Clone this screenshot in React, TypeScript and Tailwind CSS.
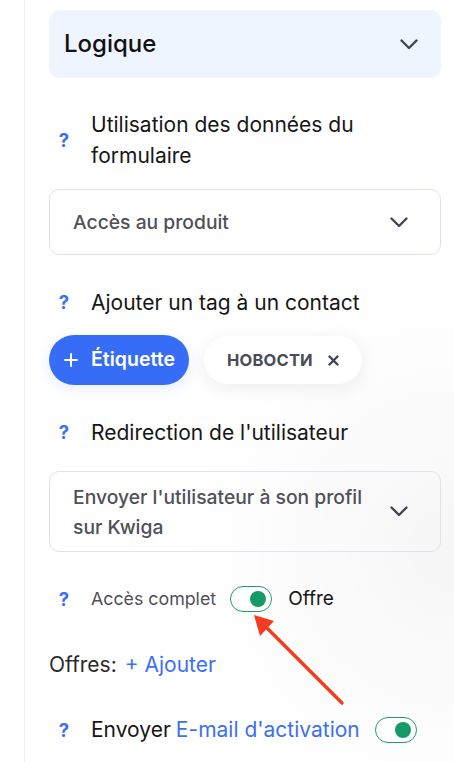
import React from "react";

function Chevron({ className = "" }: { className?: string }) {
  return (
    <svg width="18" height="11" viewBox="0 0 18 11" fill="none" className={className}>
      <polyline points="1.5,1.5 9,9 16.5,1.5" stroke="#3f4653" strokeWidth="2.4" strokeLinecap="round" strokeLinejoin="round" />
    </svg>
  );
}

function Q() {
  return (
    <span className="w-[30px] shrink-0 text-center text-[18.5px] font-bold text-[#3c6ff6] leading-none">?</span>
  );
}

function Toggle() {
  return (
    <span className="inline-flex items-center justify-end w-[42px] h-[26px] rounded-full border-[1.5px] border-[#1e9e6b] bg-white pr-[5px] box-border">
      <span className="w-[16px] h-[16px] rounded-full bg-[#169b68]" />
    </span>
  );
}

export default function App() {
  return (
    <div className="relative w-[454px] h-[762px] bg-white overflow-hidden font-['Inter',sans-serif]">
      <div className="absolute inset-0 pointer-events-none bg-[radial-gradient(circle_at_100%_72%,rgba(0,0,0,0.035),transparent_38%)]" />
      <div className="relative pl-[24px] h-full">
        <div className="border-l border-[#efefef] h-full pl-[24px] pr-[13px] pt-[10px]">
          {/* Logique panel */}
          <div className="h-[68px] rounded-[10px] bg-[#eff5fe] flex items-center justify-between pl-[15px] pr-[23px]">
            <span className="text-[24px] font-medium text-[#111111]">Logique</span>
            <Chevron />
          </div>

          {/* Label 1 */}
          <div className="mt-[31px] flex items-center">
            <Q />
            <span className="ml-[12px] text-[21px] leading-[31px] text-[#161616]">
              Utilisation des données du
              <br />
              formulaire
            </span>
          </div>

          {/* Select 1 */}
          <div className="mt-[18px] h-[66px] rounded-[10px] border border-[#e2e0ee] flex items-center justify-between pl-[23px] pr-[32px]">
            <span className="text-[19.3px] font-medium text-[#4f5058]">Accès au produit</span>
            <Chevron />
          </div>

          {/* Label 2 */}
          <div className="mt-[32px] flex items-center h-[31px]">
            <Q />
            <span className="ml-[12px] text-[21px] leading-[31px] text-[#161616]">Ajouter un tag à un contact</span>
          </div>

          {/* Tags */}
          <div className="mt-[17px] flex items-center gap-[15px]">
            <div className="h-[50px] w-[140px] rounded-full bg-[#376cf6] flex items-center pl-[15px] text-white shadow-[0_4px_14px_rgba(55,108,246,0.12)]">
              <svg width="14" height="14" viewBox="0 0 14 14">
                <path d="M7 1v12M1 7h12" stroke="white" strokeWidth="2" strokeLinecap="round" />
              </svg>
              <span className="ml-[13px] text-[19.5px] font-semibold">Étiquette</span>
            </div>
            <div className="h-[48px] w-[158px] rounded-full bg-white flex items-center pl-[23px] shadow-[0_4px_18px_rgba(20,30,60,0.08)]">
              <span className="text-[16.5px] font-bold text-[#4a4d55] tracking-[0.2px]">НОВОСТИ</span>
              <svg width="11" height="11" viewBox="0 0 11 11" className="ml-[15px]">
                <path d="M1.5 1.5l8 8M9.5 1.5l-8 8" stroke="#3f4653" strokeWidth="2.4" strokeLinecap="round" />
              </svg>
            </div>
          </div>

          {/* Label 3 */}
          <div className="mt-[32px] flex items-center h-[31px]">
            <Q />
            <span className="ml-[12px] text-[21px] leading-[31px] text-[#161616]">Redirection de l'utilisateur</span>
          </div>

          {/* Select 2 */}
          <div className="mt-[23px] h-[81px] rounded-[10px] border border-[#e2e0ee] flex items-center justify-between pl-[23px] pr-[32px]">
            <span className="text-[19.3px] leading-[30px] font-medium text-[#4f5058]">
              Envoyer l'utilisateur à son profil
              <br />
              sur Kwiga
            </span>
            <Chevron />
          </div>

          {/* Accès complet */}
          <div className="mt-[34px] flex items-center h-[26px]">
            <Q />
            <span className="ml-[12px] text-[17.8px] text-[#4f5058]">Accès complet</span>
            <span className="ml-[14px]"><Toggle /></span>
            <span className="ml-[16px] text-[19px] text-[#161616]">Offre</span>
          </div>

          {/* Offres */}
          <div className="mt-[40px] flex items-center h-[26px] text-[21px]">
            <span className="text-[#2a2a2a]">Offres:</span>
            <span className="ml-[8px] text-[#3c6ff6]">+ Ajouter</span>
          </div>

          {/* Envoyer */}
          <div className="mt-[39px] flex items-center h-[26px]">
            <Q />
            <span className="ml-[12px] text-[21px] text-[#161616]">Envoyer</span>
            <span className="ml-[5px] text-[21px] text-[#3c6ff6]">E-mail d'activation</span>
            <span className="ml-[15px]"><Toggle /></span>
          </div>
        </div>
      </div>

      {/* Red arrow annotation */}
      <svg className="absolute left-0 top-0 pointer-events-none" width="454" height="762">
        <line x1="342" y1="703" x2="265" y2="626" stroke="#f23b1f" strokeWidth="3.4" strokeLinecap="round" />
        <polygon points="254,615 274,621 260,636" fill="#f23b1f" />
      </svg>
    </div>
  );
}
